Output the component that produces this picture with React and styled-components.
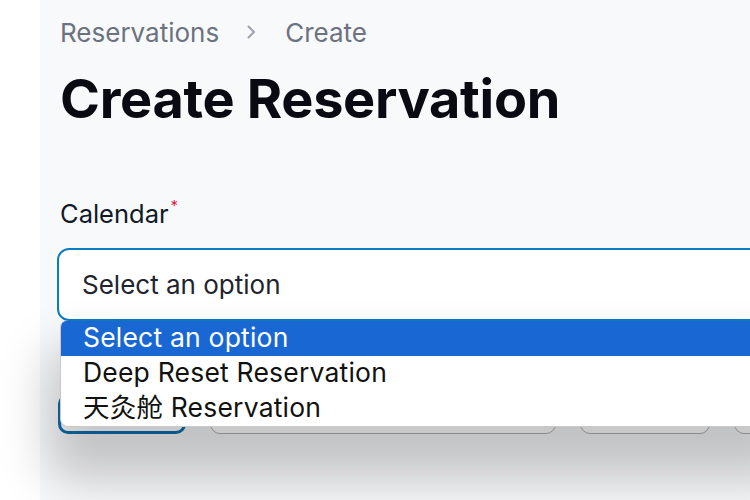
import React from "react";
import styled, { createGlobalStyle } from "styled-components";

const GlobalStyle = createGlobalStyle`
  html, body {
    margin: 0;
    padding: 0;
    background: #ffffff;
    font-family: Inter, "Noto Sans", "Noto Sans CJK SC", sans-serif;
  }
`;

const Shell = styled.div`
  display: grid;
  grid-template-columns: 40px 1fr;
  width: 750px;
  height: 500px;
  overflow: hidden;
`;

const Side = styled.div`
  background: #ffffff;
`;

const Main = styled.main`
  background: #f8f9fb;
  padding: 15px 0 0 20px;
  display: flex;
  flex-direction: column;
  min-width: 0;
`;

const Crumbs = styled.nav`
  display: flex;
  align-items: center;
  gap: 26px;
  font-size: 26px;
  color: #6b7280;
  height: 34px;
`;

const Title = styled.h1`
  margin: 20px 0 0;
  font-size: 54px;
  font-weight: 700;
  color: #0a0a12;
  letter-spacing: -0.3px;
  line-height: 1.1;
`;

const Label = styled.label`
  margin-top: 70px;
  font-size: 25.5px;
  color: #111827;
  height: 32px;
  display: flex;
  align-items: flex-start;
  sup {
    color: #e11d48;
    font-size: 15px;
    margin-left: 2px;
    line-height: 1;
  }
`;

const Field = styled.div`
  position: relative;
  margin: 18px -30px 0 -3px;
`;

const Select = styled.div`
  box-sizing: border-box;
  height: 73px;
  border: 2px solid #0c7cc1;
  border-radius: 12px;
  background: #ffffff;
  display: flex;
  align-items: center;
  padding-left: 23px;
  font-size: 26px;
  color: #1f2430;
`;

const Listbox = styled.ul`
  position: absolute;
  top: 73px;
  left: 3px;
  right: 0;
  margin: 0;
  padding: 0;
  list-style: none;
  background: #ffffff;
  border: 1px solid #c9c9c9;
  border-top: none;
  border-radius: 6px 0 0 8px;
  box-shadow: 0 40px 50px 12px rgba(0, 0, 0, 0.22);
  overflow: hidden;
  z-index: 2;
`;

const Option = styled.li`
  height: 35px;
  line-height: 33px;
  padding-left: 22px;
  font-size: 26.5px;
  letter-spacing: 0.2px;
  color: ${(p) => (p.$active ? "#ffffff" : "#111111")};
  background: ${(p) => (p.$active ? "#1967d2" : "transparent")};
`;

const Actions = styled.div`
  display: flex;
  gap: 24px;
  margin: 73px -30px 0 -2px;
`;

const Control = styled.div`
  box-sizing: border-box;
  height: 40px;
  width: ${(p) => p.$w}px;
  flex: none;
  border-radius: 10px;
  border: ${(p) => (p.$primary ? "3px solid #0c6fad" : "1px solid #b0b0b0")};
  background: #ffffff;
`;

export default function App() {
  return (
    <Shell>
      <GlobalStyle />
      <Side />
      <Main>
        <Crumbs>
          <span>Reservations</span>
          <svg width="14" height="20" viewBox="0 0 14 20">
            <path d="M3 4l6 6-6 6" fill="none" stroke="#9ca3af" strokeWidth="2" />
          </svg>
          <span>Create</span>
        </Crumbs>
        <Title>Create Reservation</Title>
        <Label>
          Calendar<sup>*</sup>
        </Label>
        <Field>
          <Select>Select an option</Select>
          <Listbox>
            <Option $active>Select an option</Option>
            <Option>Deep Reset Reservation</Option>
            <Option>天灸舱 Reservation</Option>
          </Listbox>
        </Field>
        <Actions>
          <Control $primary $w={128} />
          <Control $w={346} />
          <Control $w={130} />
          <Control $w={100} />
        </Actions>
      </Main>
    </Shell>
  );
}
